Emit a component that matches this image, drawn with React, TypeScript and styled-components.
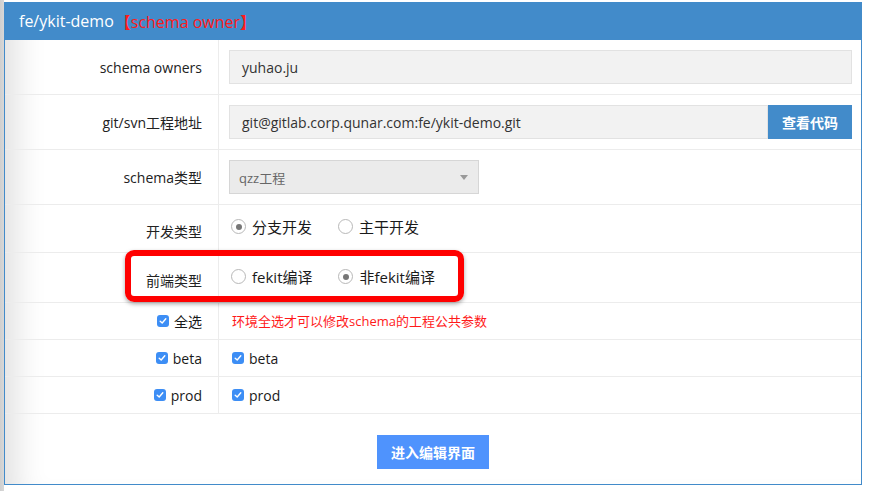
import React from "react";
import styled, { createGlobalStyle } from "styled-components";

const GlobalStyle = createGlobalStyle`
  html, body { margin: 0; padding: 0; }
  body {
    background: linear-gradient(to right, #cfcfcf 0, #d8d8d8 4px, #ffffff 4px);
    font-family: "Open Sans", "Noto Sans CJK SC", sans-serif;
    color: #222;
    width: 869px;
    height: 491px;
    overflow: hidden;
  }
`;

const Frame = styled.div`
  padding: 2px 7px 0 4px;
`;

const Panel = styled.div`
  position: relative;
  border: 1px solid #428bca;
  border-top: none;
  background: #fff;
  box-shadow: inset 34px 0 30px -22px rgba(0, 0, 0, 0.12);
  height: 483px;
  box-sizing: border-box;
`;

const Header = styled.div`
  height: 38px;
  background: #428bca;
  margin: 0 -1px;
  display: flex;
  align-items: center;
  padding-left: 15px;
  font-size: 16px;
  color: #fff;
`;

const Owner = styled.span`
  color: #ff1a1a;
  margin-left: 1px;
`;

const Row = styled.div<{ $h: number }>`
  display: grid;
  grid-template-columns: 214px 1fr;
  height: ${(p) => p.$h}px;
  border-bottom: 1px solid #ececec;
  box-sizing: border-box;
`;

const Label = styled.div<{ $dy?: number }>`
  border-right: 1px solid #ececec;
  display: flex;
  align-items: center;
  justify-content: flex-end;
  gap: 5px;
  padding-right: 16px;
  padding-top: ${(p) => (p.$dy ?? 0) * 2}px;
  font-size: 14px;
  color: #222;
`;

const Value = styled.div<{ $dy?: number; $pl?: number }>`
  display: flex;
  align-items: center;
  padding: 0 9px 0 ${(p) => p.$pl ?? 10}px;
  padding-bottom: ${(p) => (p.$dy ?? 0) * 2}px;
  font-size: 14px;
`;

const InputBox = styled.div`
  flex: 1;
  height: 34px;
  box-sizing: border-box;
  background: #f2f2f2;
  border: 1px solid #e2e2e2;
  display: flex;
  align-items: center;
  padding-left: 12px;
  font-size: 14px;
  color: #333;
`;

const InputGroup = styled.div`
  flex: 1;
  display: flex;
`;

const AddonButton = styled.button`
  width: 84px;
  height: 34px;
  border: none;
  background: #428bca;
  color: #fff;
  font-family: "Noto Sans CJK SC", sans-serif;
  font-weight: 700;
  font-size: 14px;
  padding: 0;
`;

const Select = styled.div`
  width: 250px;
  height: 34px;
  box-sizing: border-box;
  background: #ebebeb;
  border: 1px solid #d6d6d6;
  display: flex;
  align-items: center;
  justify-content: space-between;
  padding: 0 10px 0 9px;
  font-size: 13px;
  color: #666;
`;

const Caret = styled.span`
  width: 0;
  height: 0;
  border-left: 4px solid transparent;
  border-right: 4px solid transparent;
  border-top: 5px solid #999;
`;

const RadioGroup = styled.div`
  display: flex;
  gap: 26px;
  padding-left: 2px;
`;

const RadioItem = styled.label`
  display: flex;
  align-items: center;
  gap: 6px;
  font-size: 15px;
  color: #1a1a1a;
`;

const RadioCircle = styled.span<{ $on?: boolean }>`
  width: 13px;
  height: 13px;
  border-radius: 50%;
  border: 1px solid #b8b8b8;
  background: #fff;
  display: flex;
  align-items: center;
  justify-content: center;
  &::after {
    content: "";
    width: 6px;
    height: 6px;
    border-radius: 50%;
    background: ${(p) => (p.$on ? "#777" : "transparent")};
  }
`;

const CheckItem = styled.span`
  display: flex;
  align-items: center;
  gap: 5px;
  font-size: 14px;
  color: #1a1a1a;
`;

const CheckBox = styled.span`
  width: 12px;
  height: 12px;
  border-radius: 3px;
  background: #3d8ef5;
  display: flex;
  align-items: center;
  justify-content: center;
`;

const Note = styled.span`
  color: #ff1a1a;
  font-size: 13px;
  padding-bottom: 2px;
`;

const Footer = styled.div`
  display: flex;
  justify-content: center;
  padding-top: 21px;
`;

const SubmitButton = styled.button`
  width: 112px;
  height: 34px;
  border: none;
  background: #4f93fd;
  color: #fff;
  font-family: "Noto Sans CJK SC", sans-serif;
  font-weight: 700;
  font-size: 14px;
  padding: 0;
`;

const Highlight = styled.div`
  position: absolute;
  left: 120px;
  top: 248px;
  width: 339px;
  height: 52px;
  box-sizing: border-box;
  border: 6px solid #ff0000;
  border-radius: 9px;
  box-shadow: 0 2px 4px rgba(0, 0, 0, 0.35);
  pointer-events: none;
`;

const Check = () => (
  <CheckBox>
    <svg width="8" height="8" viewBox="0 0 8 8">
      <path d="M1.2 4.2 L3.2 6 L6.8 1.8" fill="none" stroke="#fff" strokeWidth="1.4" strokeLinecap="round" strokeLinejoin="round" />
    </svg>
  </CheckBox>
);

export default function App() {
  return (
    <>
      <GlobalStyle />
      <Frame>
        <Panel>
          <Header>
            fe/ykit-demo<Owner>【schema owner】</Owner>
          </Header>
          <Row $h={55}>
            <Label>schema owners</Label>
            <Value>
              <InputBox>yuhao.ju</InputBox>
            </Value>
          </Row>
          <Row $h={55}>
            <Label>git/svn工程地址</Label>
            <Value>
              <InputGroup>
                <InputBox>git@gitlab.corp.qunar.com:fe/ykit-demo.git</InputBox>
                <AddonButton>查看代码</AddonButton>
              </InputGroup>
            </Value>
          </Row>
          <Row $h={55}>
            <Label>schema类型</Label>
            <Value>
              <Select>
                qzz工程
                <Caret />
              </Select>
            </Value>
          </Row>
          <Row $h={48}>
            <Label $dy={2}>开发类型</Label>
            <Value $dy={2}>
              <RadioGroup>
                <RadioItem>
                  <RadioCircle $on />
                  分支开发
                </RadioItem>
                <RadioItem>
                  <RadioCircle />
                  主干开发
                </RadioItem>
              </RadioGroup>
            </Value>
          </Row>
          <Row $h={50}>
            <Label $dy={2}>前端类型</Label>
            <Value $dy={1}>
              <RadioGroup>
                <RadioItem>
                  <RadioCircle />
                  fekit编译
                </RadioItem>
                <RadioItem>
                  <RadioCircle $on />
                  非fekit编译
                </RadioItem>
              </RadioGroup>
            </Value>
          </Row>
          <Row $h={37}>
            <Label>
              <CheckItem>
                <Check />
                全选
              </CheckItem>
            </Label>
            <Value $pl={13}>
              <Note>环境全选才可以修改schema的工程公共参数</Note>
            </Value>
          </Row>
          <Row $h={37}>
            <Label>
              <CheckItem>
                <Check />
                beta
              </CheckItem>
            </Label>
            <Value $pl={13}>
              <CheckItem>
                <Check />
                beta
              </CheckItem>
            </Value>
          </Row>
          <Row $h={37}>
            <Label>
              <CheckItem>
                <Check />
                prod
              </CheckItem>
            </Label>
            <Value $pl={13}>
              <CheckItem>
                <Check />
                prod
              </CheckItem>
            </Value>
          </Row>
          <Footer>
            <SubmitButton>进入编辑界面</SubmitButton>
          </Footer>
          <Highlight />
        </Panel>
      </Frame>
    </>
  );
}
